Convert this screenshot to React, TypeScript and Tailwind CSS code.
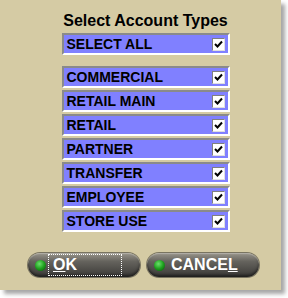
import React from "react";

const items = ["COMMERCIAL", "RETAIL MAIN", "RETAIL", "PARTNER", "TRANSFER", "EMPLOYEE", "STORE USE"];

function Check() {
  return (
    <div className="w-[13px] h-[13px] bg-white border border-t-[#808080] border-l-[#808080] border-r-[#e0e0e0] border-b-[#e0e0e0] flex items-center justify-center">
      <svg width="9" height="9" viewBox="0 0 9 9">
        <path d="M1 4 L3.5 6.5 L8 1.5" stroke="#000" strokeWidth="2" fill="none" />
      </svg>
    </div>
  );
}

function Row({ label }: { label: string }) {
  return (
    <div className="w-[168px] h-[22px] bg-[#8080ff] border-2 border-t-[#8a8a8a] border-l-[#8a8a8a] border-r-white border-b-white flex items-center justify-between pl-[3px] pr-[3px]">
      <span className="text-[14px] font-bold text-black leading-none">{label}</span>
      <Check />
    </div>
  );
}

function Btn({ children, focus }: { children: React.ReactNode; focus?: boolean }) {
  return (
    <div className="w-[112px] h-[24px] rounded-full bg-[linear-gradient(180deg,#9a968c_0%,#65635d_35%,#3a3936_100%)] shadow-[inset_0_-2px_3px_rgba(0,0,0,0.5),inset_0_1px_1px_rgba(255,255,255,0.3),0_0_0_1px_rgba(60,58,52,0.6)] flex items-center pl-[7px]">
      <div className="w-[11px] h-[11px] rounded-full bg-[radial-gradient(circle_at_40%_35%,#6be06b_0%,#1ea01e_50%,#0a4a0a_100%)]" />
      <div className={"ml-[2px] h-[22px] flex items-center pl-[4px] " + (focus ? "border border-dotted border-white w-[74px]" : "")}>
        <span className="text-[16px] font-bold text-white leading-none">{children}</span>
      </div>
    </div>
  );
}

export default function App() {
  return (
    <div className="w-[288px] h-[298px] bg-white" style={{ fontFamily: "'Liberation Sans', Arial, sans-serif" }}>
      <div className="w-[281px] h-[290px] bg-[#d5cba4] shadow-[4px_4px_4px_rgba(0,0,0,0.35)] flex flex-col items-center">
        <div className="mt-[13px] text-[16px] font-bold text-black leading-none ml-[10px]">Select Account Types</div>
        <div className="mt-[4px] ml-[10px]">
          <Row label="SELECT ALL" />
        </div>
        <div className="mt-[11px] ml-[10px] flex flex-col gap-[2px]">
          {items.map((i) => (
            <Row key={i} label={i} />
          ))}
        </div>
        <div className="mt-[21px] flex gap-[7px] ml-[6px]">
          <Btn focus>
            <span className="underline">O</span>K
          </Btn>
          <Btn>
            CANCE<span className="underline">L</span>
          </Btn>
        </div>
      </div>
    </div>
  );
}
